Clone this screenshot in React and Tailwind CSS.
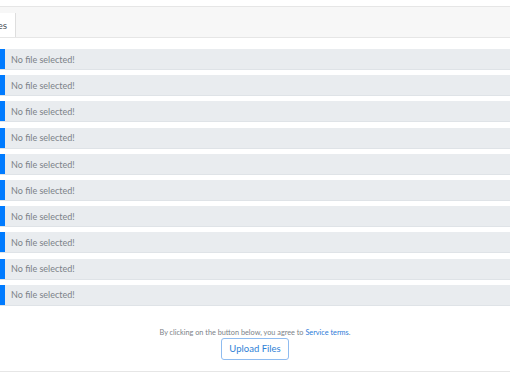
export default function App() {
  const rows = Array.from({ length: 10 });

  return (
    <div className="w-[510px] h-[382px] overflow-hidden bg-white font-['Lato',sans-serif]">
      <div className="pt-[6px]">
        {/* header with tabs */}
        <div className="h-[32px] bg-[#f7f7f7] border-t border-b border-[#e6e6e6] flex items-end">
          <div className="ml-[-17px] h-[24px] bg-white border-r border-[#dedede] pl-[4px] pr-[8px] flex items-center text-[10px] text-[#495057]">
            Files
          </div>
        </div>

        {/* file rows */}
        <div className="mt-[11px] flex flex-col gap-[5.2px]">
          {rows.map((_, i) => (
            <div key={i} className="h-[21px] flex bg-[#e9ecef] border-b border-[#dfe3e7]">
              <div className="w-[5px] bg-[#007bff]" />
              <div className="pl-[6px] pt-[1px] flex items-center text-[9px] text-[#7b8288]">No file selected!</div>
            </div>
          ))}
        </div>

        {/* footer */}
        <div className="mt-[22px] flex flex-col items-center">
          <p className="text-[7.3px] leading-[10px] text-[#7b8288]">
            By clicking on the button below, you agree to{" "}
            <span className="text-[#2b7bd8]">Service terms</span>.
          </p>
          <button className="mt-0 h-[22px] px-[7px] rounded-[3px] border border-[#8fbcf0] text-[#2f7fd6] text-[9.5px] bg-white">
            Upload Files
          </button>
        </div>
        <div className="mt-[11px] border-t border-[#e6e6e6]" />
      </div>
    </div>
  );
}
